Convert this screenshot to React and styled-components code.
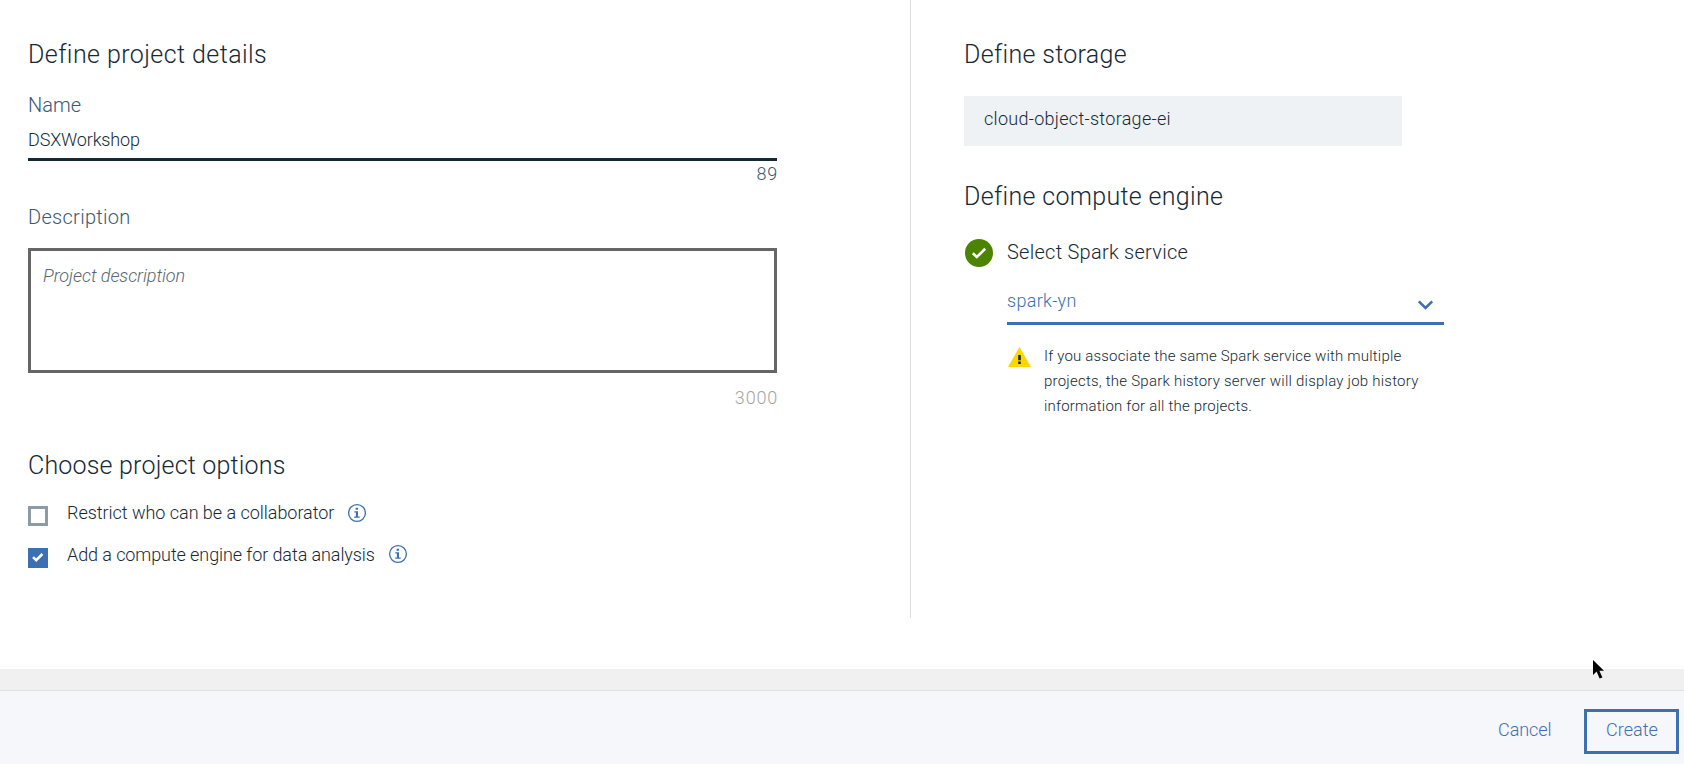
import React from 'react';
import styled, { createGlobalStyle } from 'styled-components';

const GlobalStyle = createGlobalStyle`
  *, *::before, *::after { box-sizing: border-box; }
  body {
    margin: 0;
    overflow: hidden;
    background: #fff;
    color: #152935;
    font: 300 18px/24px Roboto, "Liberation Sans", sans-serif;
    font-variant-ligatures: none;
  }
`;

const Page = styled.div`
  display: flex;
  flex-direction: column;
  height: 764px;
  width: 1684px;
`;

const Main = styled.main`
  display: flex;
  align-items: flex-start;
  flex: 0 0 669px;
`;

const DetailsColumn = styled.section`
  flex: 0 0 911px;
  height: 618px;
  padding: 40px 133px 0 28px;
  border-right: 1px solid #dcdcdc;
`;

const ServicesColumn = styled.section`
  flex: 1;
  padding: 40px 0 0 53px;
`;

const Heading = styled.h2`
  margin: ${(p) => p.$top || 0}px 0 0;
  font-size: 25px;
  line-height: 30px;
  font-weight: 360;
  letter-spacing: ${(p) => p.$track || 0}px;
`;

const Label = styled.label`
  display: block;
  margin-top: ${(p) => p.$top}px;
  font-size: 20px;
  color: #3b5872;
  letter-spacing: ${(p) => p.$track || 0}px;
`;

const NameInput = styled.input`
  display: block;
  width: 100%;
  height: 33px;
  margin-top: 11px;
  padding: 0 0 8px;
  border: 0;
  border-bottom: 3px solid #152935;
  border-radius: 0;
  outline: 0;
  background: transparent;
  color: #152935;
  font: inherit;
  letter-spacing: -0.14px;
`;

const Counter = styled.div`
  margin: ${(p) => p.$top}px -1px 0 0;
  text-align: right;
  letter-spacing: 0.8px;
  color: ${(p) => (p.$muted ? '#a4a4a4' : '#3b5872')};
`;

const DescriptionArea = styled.textarea`
  display: block;
  width: 100%;
  height: 125px;
  margin-top: 19px;
  padding: 13px 12px;
  border: 3px solid #666;
  border-radius: 0;
  outline: 0;
  resize: none;
  background: transparent;
  font: inherit;
  letter-spacing: -0.06px;
  &::placeholder {
    color: #5a6872;
    font-style: italic;
    opacity: 1;
  }
`;

const OptionRow = styled.div`
  display: flex;
  align-items: flex-start;
  height: 25px;
  margin-top: ${(p) => p.$top}px;
`;

const CheckBox = styled.span`
  display: flex;
  align-items: center;
  justify-content: center;
  flex: 0 0 20px;
  height: 20px;
  margin: 5px 19px 0 0;
  border: ${(p) => (p.$checked ? '0' : '3px solid #8c9ba5')};
  background: ${(p) => (p.$checked ? '#3d70b2' : 'transparent')};
`;

const OptionText = styled.span`
  letter-spacing: ${(p) => p.$track || 0}px;
  margin-right: ${(p) => p.$gap}px;
  white-space: nowrap;
`;

const InfoSvg = styled.svg`
  margin-top: ${(p) => p.$top}px;
`;

const StorageBox = styled.div`
  width: 438px;
  height: 50px;
  margin-top: 26px;
  padding: 11px 20px;
  background: #eef2f5;
  letter-spacing: 0.29px;
`;

const ServiceRow = styled.div`
  display: flex;
  align-items: flex-start;
  margin: 27px 0 0 1px;
`;

const ServiceBody = styled.div`
  width: 437px;
  margin-left: 14px;
`;

const ServiceTitle = styled.div`
  margin-top: 1px;
  font-size: 20px;
  letter-spacing: 0.26px;
`;

const Select = styled.div`
  display: flex;
  justify-content: space-between;
  height: 36px;
  margin-top: 25px;
  padding-right: 10px;
  border-bottom: 3px solid #3d70b2;
  color: #3d70b2;
  letter-spacing: 0.3px;
`;

const ChevronSvg = styled.svg`
  margin-top: 10px;
`;

const Notice = styled.div`
  display: flex;
  align-items: flex-start;
  gap: 13px;
  margin-top: 19px;
`;

const WarningSvg = styled.svg`
  margin: 3px 0 0 1px;
`;

const NoticeText = styled.p`
  margin: 0;
  font-size: 15px;
  font-weight: 350;
  line-height: 25px;
  white-space: nowrap;
`;

const NoticeLine = styled.span`
  display: block;
  letter-spacing: ${(p) => p.$track}px;
`;

const Gutter = styled.div`
  flex: 0 0 21px;
  background: #f0f0f0;
`;

const Footer = styled.footer`
  display: flex;
  justify-content: flex-end;
  align-items: flex-start;
  flex: 1;
  padding: 18px 5px 0 0;
  border-top: 1px solid #dfe3e6;
  background: #f5f7fb;
`;

const Button = styled.button`
  width: ${(p) => p.$width}px;
  height: 45px;
  padding: 0 0 3px ${(p) => p.$inset}px;
  border: 3px solid ${(p) => (p.$outlined ? '#3d70b2' : 'transparent')};
  background: transparent;
  color: #3d70b2;
  font: inherit;
  text-align: left;
  letter-spacing: ${(p) => p.$track}px;
`;

const Pointer = styled.svg`
  position: absolute;
  left: 1592px;
  top: 659px;
`;

function InfoIcon({ top }) {
  return (
    <InfoSvg $top={top} width="20" height="20" viewBox="0 0 20 20" fill="none">
      <circle cx="10" cy="10" r="8.4" stroke="#3d70b2" strokeWidth="1.3" />
      <path d="M8.6 4.8h2.4v2H8.6zM7.3 8.3h3.7v5.2h1.7v1.3H7.2v-1.3h1.7V9.6H7.3z" fill="#3d70b2" />
    </InfoSvg>
  );
}

export default function App() {
  return (
    <>
      <GlobalStyle />
      <Page>
        <Main>
          <DetailsColumn>
            <Heading $track={0.42}>Define project details</Heading>
            <Label $top={23}>Name</Label>
            <NameInput defaultValue="DSXWorkshop" />
            <Counter $top={1}>89</Counter>
            <Label $top={19} $track={0.3}>Description</Label>
            <DescriptionArea placeholder="Project description" />
            <Counter $top={13} $muted>3000</Counter>
            <Heading $top={41} $track={0.19}>Choose project options</Heading>
            <OptionRow $top={20}>
              <CheckBox />
              <OptionText $gap={13} $track={-0.03}>Restrict who can be a collaborator</OptionText>
              <InfoIcon top={2} />
            </OptionRow>
            <OptionRow $top={17}>
              <CheckBox $checked>
                <svg width="12" height="12" viewBox="0 0 12 12" fill="none">
                  <path d="M1 5.2L4.2 8.2L10.4 2" stroke="#fff" strokeWidth="2.5" />
                </svg>
              </CheckBox>
              <OptionText $gap={13} $track={-0.09}>Add a compute engine for data analysis</OptionText>
              <InfoIcon top={1} />
            </OptionRow>
          </DetailsColumn>
          <ServicesColumn>
            <Heading $track={0.31}>Define storage</Heading>
            <StorageBox>cloud-object-storage-ei</StorageBox>
            <Heading $top={36} $track={0.32}>Define compute engine</Heading>
            <ServiceRow>
              <svg width="28" height="28" viewBox="0 0 28 28" fill="none">
                <circle cx="14" cy="14" r="14" fill="#4b8400" />
                <path d="M7.8 14.2L11.8 18L20.2 9.8" stroke="#fff" strokeWidth="2.6" />
              </svg>
              <ServiceBody>
                <ServiceTitle>Select Spark service</ServiceTitle>
                <Select>
                  <span>spark-yn</span>
                  <ChevronSvg width="17" height="12" viewBox="0 0 17 12" fill="none">
                    <path d="M1.8 2.4L8.5 9L15.2 2.4" stroke="#3d70b2" strokeWidth="2.6" />
                  </ChevronSvg>
                </Select>
                <Notice>
                  <WarningSvg width="23" height="20" viewBox="0 0 23 20">
                    <path d="M11.5 0L23 20H0z" fill="#fdd600" />
                    <path d="M10.2 8h2.6v5.2h-2.6zM10.2 14.6h2.6v2.4h-2.6z" fill="#152935" />
                  </WarningSvg>
                  <NoticeText>
                    <NoticeLine $track={0.19}>If you associate the same Spark service with multiple</NoticeLine>
                    <NoticeLine $track={0.23}>projects, the Spark history server will display job history</NoticeLine>
                    <NoticeLine $track={0.2}>information for all the projects.</NoticeLine>
                  </NoticeText>
                </Notice>
              </ServiceBody>
            </ServiceRow>
          </ServicesColumn>
        </Main>
        <Gutter />
        <Footer>
          <Button $width={90} $inset={1} $track={-0.05}>Cancel</Button>
          <Button $width={95} $inset={19} $track={0.05} $outlined>Create</Button>
        </Footer>
      </Page>
      <Pointer width="14" height="22" viewBox="0 0 14 22">
        <path d="M1 1V16L4.6 12.6L7.6 19.5L10.4 18.6L7.4 11.8H12z" fill="#000" />
      </Pointer>
    </>
  );
}
